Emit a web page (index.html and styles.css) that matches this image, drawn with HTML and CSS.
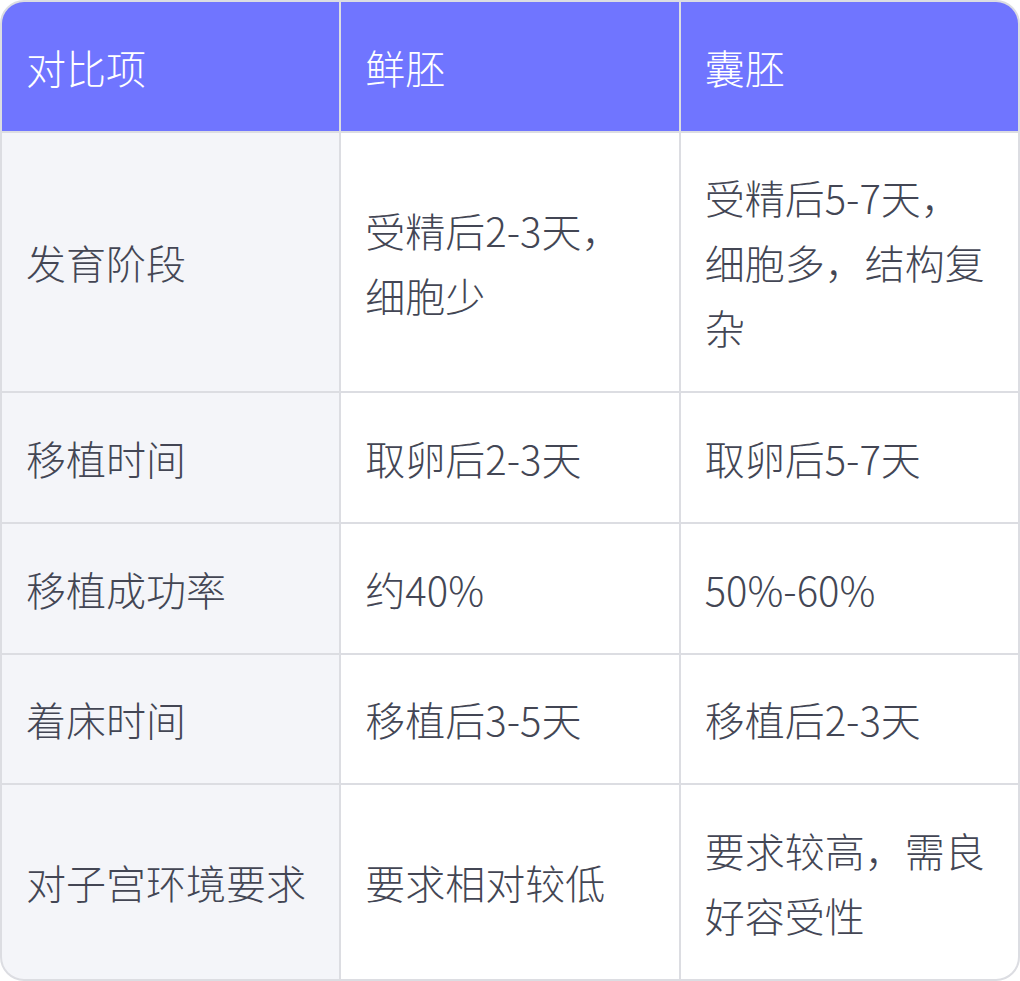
FILE: index.html
```html
<!DOCTYPE html>
<html lang="zh-CN">
<head>
<meta charset="utf-8">
<link rel="stylesheet" href="styles.css">
</head>
<body>
<div class="table">
  <div class="cell head">对比项</div>
  <div class="cell head">鲜胚</div>
  <div class="cell head">囊胚</div>

  <div class="cell first">发育阶段</div>
  <div class="cell">受精后2-3天，细胞少</div>
  <div class="cell">受精后5-7天，细胞多，结构复杂</div>

  <div class="cell first">移植时间</div>
  <div class="cell">取卵后2-3天</div>
  <div class="cell">取卵后5-7天</div>

  <div class="cell first">移植成功率</div>
  <div class="cell">约40%</div>
  <div class="cell">50%-60%</div>

  <div class="cell first">着床时间</div>
  <div class="cell">移植后3-5天</div>
  <div class="cell">移植后2-3天</div>

  <div class="cell first">对子宫环境要求</div>
  <div class="cell">要求相对较低</div>
  <div class="cell">要求较高，需良好容受性</div>
</div>
</body>
</html>
```
FILE: styles.css
```css
html, body {
  margin: 0;
  padding: 0;
  background: #ffffff;
}
body {
  font-family: "Noto Sans CJK SC", "Noto Sans", sans-serif;
}
.table {
  width: 1020px;
  box-sizing: border-box;
  border: 2px solid #dcdde2;
  border-radius: 24px;
  overflow: hidden;
  display: grid;
  grid-template-columns: repeat(3, 1fr);
  gap: 2px;
  background: #dcdde2;
}
.cell {
  background: #ffffff;
  color: #434654;
  font-size: 40px;
  font-weight: 300;
  line-height: 65px;
  padding: 32.67px 24px 31px 24px;
  display: flex;
  align-items: center;
}
.cell.head {
  background: #7075ff;
  color: #ffffff;
}
.cell.first {
  background: #f4f5f9;
}
```
